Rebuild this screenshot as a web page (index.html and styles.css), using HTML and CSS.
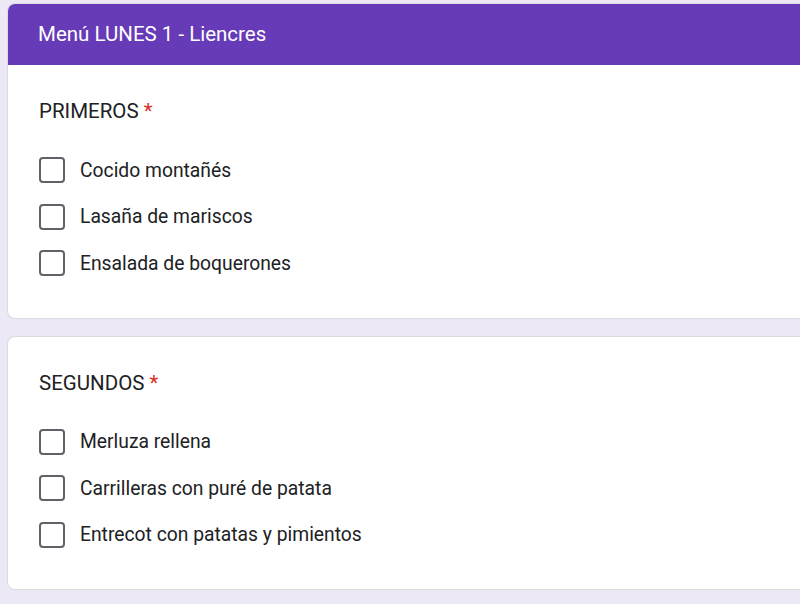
FILE: index.html
```html
<!DOCTYPE html>
<html lang="es">
<head>
    <meta charset="UTF-8">
    <meta name="viewport" content="width=device-width, initial-scale=1.0">
    <title>Menú LUNES 1 - Liencres</title>
    <link rel="stylesheet" href="styles.css">
</head>
<body>
    <div class="form">
        <div class="card">
            <div class="card-title">Menú LUNES 1 - Liencres</div>
            <div class="question">
                <p class="heading">PRIMEROS <span class="important">*</span></p>
                <label class="option"><span class="box"></span>Cocido montañés</label>
                <label class="option"><span class="box"></span>Lasaña de mariscos</label>
                <label class="option"><span class="box"></span>Ensalada de boquerones</label>
            </div>
        </div>
        <div class="card">
            <div class="question">
                <p class="heading">SEGUNDOS <span class="important">*</span></p>
                <label class="option"><span class="box"></span>Merluza rellena</label>
                <label class="option"><span class="box"></span>Carrilleras con puré de patata</label>
                <label class="option"><span class="box"></span>Entrecot con patatas y pimientos</label>
            </div>
        </div>
    </div>
</body>
</html>
```
FILE: styles.css
```css
*{
    padding: 0;
    margin: 0;
    box-sizing: border-box;
    font-family: Roboto, Arial, Helvetica, sans-serif;
}
body{
    background-color: #ece8f6;
    overflow: hidden;
}
.form{
    padding: 3px 0 0 7px;
    display: flex;
    flex-direction: column;
    gap: 17px;
}
.card{
    background-color: #fff;
    border: 1px solid #dadce0;
    border-right: none;
    border-radius: 8px 0 0 8px;
    overflow: hidden;
}
.card-title{
    background-color: #673ab7;
    color: #fff;
    height: 62px;
    display: flex;
    align-items: center;
    padding-left: 31px;
    font-size: 20.5px;
    margin: -1px 0 0 -1px;
}
.question{
    padding: 34px 0 31px 31px;
}
.heading{
    font-size: 20.5px;
    line-height: 24px;
    color: #202124;
    margin-bottom: 24px;
}
.important{
    color: #d93025;
}
.option{
    display: flex;
    align-items: center;
    height: 46.5px;
    font-size: 19.3px;
    color: #202124;
}
.box{
    width: 26px;
    height: 26px;
    border: 2.5px solid #5f6368;
    border-radius: 4px;
    margin-right: 15px;
}
```
